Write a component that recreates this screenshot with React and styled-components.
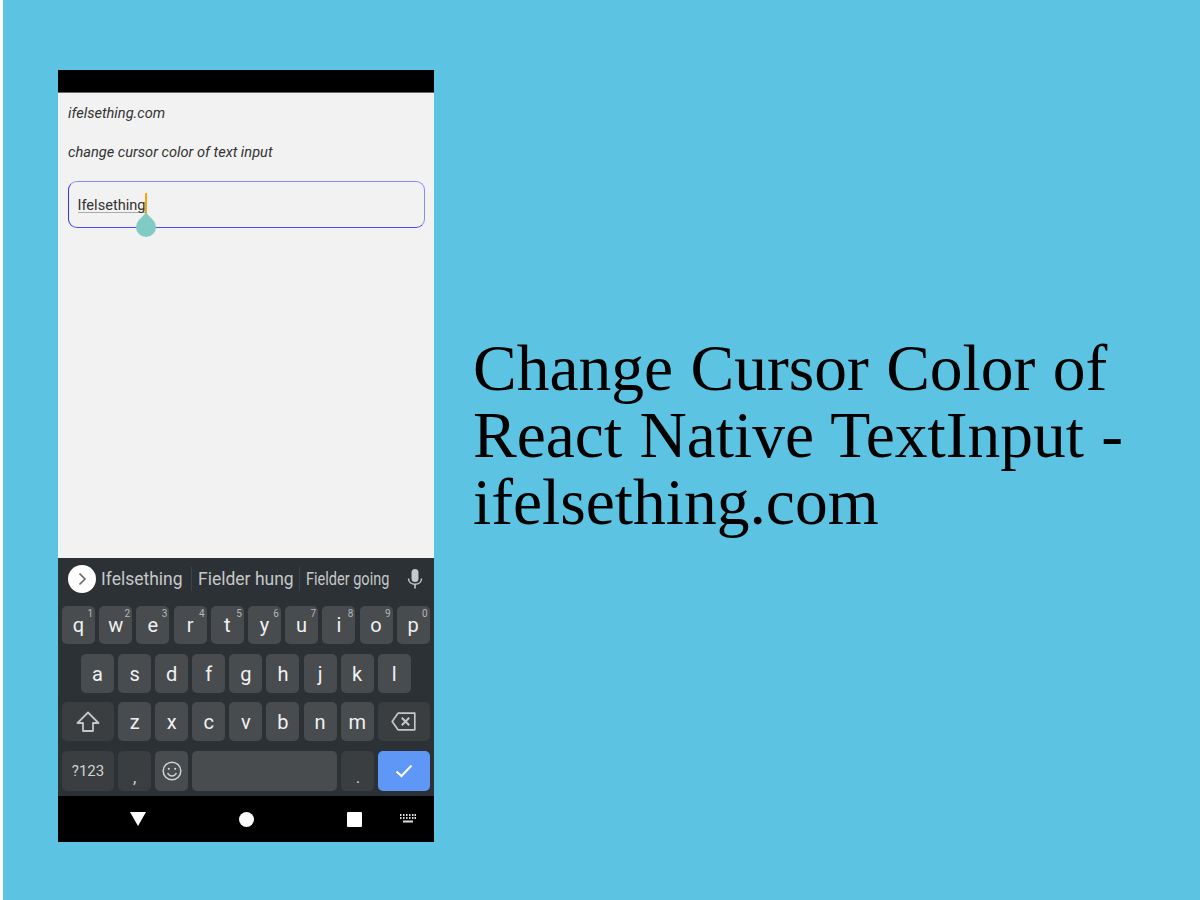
import React from 'react';
import styled, { createGlobalStyle } from 'styled-components';

const Global = createGlobalStyle`
  html, body {
    margin: 0;
    padding: 0;
    background: #fff;
  }
`;

const Page = styled.div`
  width: 1197px;
  height: 900px;
  margin-left: 3px;
  background: #5cc4e2;
  display: flex;
  overflow: hidden;
`;

const Phone = styled.div`
  width: 376px;
  height: 772px;
  margin: 70px 0 0 55px;
  display: flex;
  flex-direction: column;
  flex-shrink: 0;
  font-family: Roboto, sans-serif;
`;

const StatusBar = styled.div`
  height: 22px;
  background: #000;
  border-bottom: 1px solid #666;
`;

const Content = styled.div`
  flex: 1;
  background: #f2f2f2;
  padding: 12px 10px 0;
  display: flex;
  flex-direction: column;
`;

const Label = styled.div`
  font-size: 14.6px;
  font-style: italic;
  font-weight: 400;
  line-height: 16px;
  height: 39px;
  color: #333;
`;

const InputBox = styled.div`
  position: relative;
  width: 357px;
  height: 47px;
  box-sizing: border-box;
  margin-top: -2px;
  border: 1px solid #8a8aff;
  border-bottom-color: #4a4aff;
  border-left-color: #3030ff;
  border-radius: 9px;
  padding: 15px 8.5px 0;
  font-size: 14.6px;
  line-height: 16px;
  color: #333;
`;

const Typed = styled.span`
  display: inline-block;
  line-height: 14px;
  border-bottom: 1px solid #aaa;
`;

const Cursor = styled.div`
  position: absolute;
  left: 76px;
  top: 11px;
  width: 2px;
  height: 21px;
  background: #f7a600;
`;

const Handle = styled.div`
  position: absolute;
  left: 67px;
  top: 35px;
  width: 20px;
  height: 20px;
  background: #80cbc4;
  border-radius: 50% 0 50% 50%;
  transform: rotate(-45deg);
`;

const Keyboard = styled.div`
  height: 238px;
  background: #2c3135;
  display: flex;
  flex-direction: column;
`;

const Suggestions = styled.div`
  height: 48px;
  box-sizing: border-box;
  padding: 0 0 6px 10px;
  display: flex;
  align-items: center;
  color: #c6c8c9;
`;

const ExpandButton = styled.div`
  width: 28px;
  height: 28px;
  border-radius: 50%;
  background: #fff;
  display: flex;
  align-items: center;
  justify-content: center;
  margin-right: 5px;
`;

const Suggestion = styled.div`
  font-size: 17.5px;
  white-space: nowrap;
  width: ${(p) => p.$width}px;
  transform: scaleX(${(p) => p.$squeeze || 1});
  transform-origin: left center;
`;

const Separator = styled.div`
  width: 1px;
  height: 24px;
  background: #3d4246;
  margin: 0 6px 0 ${(p) => p.$left || 6}px;
`;

const MicSlot = styled.div`
  display: flex;
  margin-left: 16px;
`;

const KeyRows = styled.div`
  display: flex;
  flex-direction: column;
`;

const KeyRow = styled.div`
  display: flex;
  gap: ${(p) => p.$gap || 4.1}px;
  height: ${(p) => p.$height || 39}px;
  margin-bottom: ${(p) => p.$bottom ?? 9}px;
  padding-left: ${(p) => p.$indent || 4}px;
`;

const Key = styled.div`
  position: relative;
  width: ${(p) => p.$width || 33}px;
  height: 100%;
  box-sizing: border-box;
  padding-top: ${(p) => (p.$low ? 12 : 0)}px;
  flex-shrink: 0;
  border-radius: 5px;
  background: ${(p) => (p.$accent ? '#5e97f6' : p.$dark ? '#3a3e41' : '#484c4f')};
  color: ${(p) => (p.$dark ? '#d0d2d3' : '#f1f1f1')};
  font-size: ${(p) => p.$size || 20}px;
  display: flex;
  align-items: center;
  justify-content: center;
`;

const Hint = styled.span`
  position: absolute;
  top: 2px;
  right: 2px;
  font-size: 10px;
  line-height: 11px;
  color: #b4b7b8;
`;

const NavBar = styled.div`
  height: 46px;
  background: #000;
  display: grid;
  grid-template-columns: 76px 140px 76px 32px;
  padding-left: 42px;
  align-items: center;
  justify-items: center;
`;

const HomeDot = styled.div`
  width: 15px;
  height: 15px;
  border-radius: 50%;
  background: #fff;
`;

const RecentSquare = styled.div`
  width: 15px;
  height: 15px;
  border-radius: 1px;
  background: #fff;
`;

const Title = styled.h1`
  margin: 335px 0 0 39px;
  width: 670px;
  font-family: 'Liberation Serif', serif;
  font-weight: 400;
  font-size: 65.5px;
  line-height: 67px;
  word-spacing: 1px;
  color: #000;
`;

const Chevron = () => (
  <svg width="14" height="14" viewBox="0 0 14 14" fill="none" stroke="#666" strokeWidth="1.6">
    <path d="M4.5 1.5 10 7l-5.5 5.5" />
  </svg>
);

const Mic = () => (
  <svg width="16" height="20" viewBox="0 0 16 20" fill="#c6c8c9">
    <rect x="4.5" y="0" width="7" height="13" rx="3.5" />
    <path d="M1.5 9.5c0 3.6 2.9 5.8 6.5 5.8s6.5-2.2 6.5-5.8" fill="none" stroke="#c6c8c9" strokeWidth="1.5" />
    <rect x="7.2" y="15" width="1.6" height="4.5" />
  </svg>
);

const Shift = () => (
  <svg width="24" height="22" viewBox="0 0 24 22" fill="none" stroke="#c4c6c7" strokeWidth="1.8">
    <path d="M12 1.5 22.5 12h-5.5v8H7v-8H1.5z" strokeLinejoin="round" />
  </svg>
);

const Backspace = () => (
  <svg width="25" height="19" viewBox="0 0 25 19" fill="none" stroke="#c4c6c7" strokeWidth="1.7">
    <path d="M7 1.2H23.8v16.6H7L1.2 9.5z" strokeLinejoin="round" />
    <path d="M10.8 5.8l7.4 7.4M18.2 5.8l-7.4 7.4" strokeWidth="2" />
  </svg>
);

const Smiley = () => (
  <svg width="20" height="20" viewBox="0 0 20 20" fill="none" stroke="#d0d2d3" strokeWidth="1.5">
    <circle cx="10" cy="10" r="8.8" />
    <circle cx="6.8" cy="7.8" r="1.1" fill="#d0d2d3" stroke="none" />
    <circle cx="13.2" cy="7.8" r="1.1" fill="#d0d2d3" stroke="none" />
    <path d="M5.6 12c1 2 2.6 3 4.4 3s3.4-1 4.4-3" />
  </svg>
);

const Check = () => (
  <svg width="18" height="14" viewBox="0 0 18 14" fill="none" stroke="#fff" strokeWidth="2">
    <path d="M1.5 7.5 6.5 12 16.5 1.5" />
  </svg>
);

const BackTriangle = () => (
  <svg width="16" height="14" viewBox="0 0 16 14" fill="#fff">
    <path d="M0 0h16L8 14z" />
  </svg>
);

const KeyboardGlyph = () => (
  <svg width="16" height="10" viewBox="0 0 16 10" fill="#ddd">
    {[0, 3, 6, 9, 12, 14.5].map((x) => (
      <rect key={x} x={x} y="0" width="1.5" height="2" />
    ))}
    {[0, 3, 6, 9, 12, 14.5].map((x) => (
      <rect key={x} x={x} y="3" width="1.5" height="2" />
    ))}
    <rect x="3" y="6.5" width="10" height="2" />
  </svg>
);

const topRow = [
  ['q', '1'], ['w', '2'], ['e', '3'], ['r', '4'], ['t', '5'],
  ['y', '6'], ['u', '7'], ['i', '8'], ['o', '9'], ['p', '0'],
];

export default function App() {
  return (
    <>
      <Global />
      <Page>
        <Phone>
          <StatusBar />
          <Content>
            <Label>ifelsething.com</Label>
            <Label>change cursor color of text input</Label>
            <InputBox>
              <Typed>Ifelsething</Typed>
              <Cursor />
              <Handle />
            </InputBox>
          </Content>
          <Keyboard>
            <Suggestions>
              <ExpandButton><Chevron /></ExpandButton>
              <Suggestion $width={82}>Ifelsething</Suggestion>
              <Separator $left={8} />
              <Suggestion $width={95}>Fielder hung</Suggestion>
              <Separator />
              <Suggestion $width={85} $squeeze={0.83}>Fielder going</Suggestion>
              <MicSlot><Mic /></MicSlot>
            </Suggestions>
            <KeyRows>
              <KeyRow $height={38} $bottom={10} $gap={4.2}>
                {topRow.map(([k, n]) => (
                  <Key key={k}>{k}<Hint>{n}</Hint></Key>
                ))}
              </KeyRow>
              <KeyRow $indent={23}>
                {'asdfghjkl'.split('').map((k) => <Key key={k}>{k}</Key>)}
              </KeyRow>
              <KeyRow $bottom={10}>
                <Key $dark $width={52}><Shift /></Key>
                {'zxcvbnm'.split('').map((k) => <Key key={k}>{k}</Key>)}
                <Key $dark $width={52}><Backspace /></Key>
              </KeyRow>
              <KeyRow $height={40} $bottom={0}>
                <Key $dark $width={52} $size={15}>?123</Key>
                <Key $dark $low $size={17}>,</Key>
                <Key><Smiley /></Key>
                <Key $width={145} />
                <Key $dark $low $size={17}>.</Key>
                <Key $accent $width={52}><Check /></Key>
              </KeyRow>
            </KeyRows>
          </Keyboard>
          <NavBar>
            <BackTriangle />
            <HomeDot />
            <RecentSquare />
            <KeyboardGlyph />
          </NavBar>
        </Phone>
        <Title>Change Cursor Color of React Native TextInput - ifelsething.com</Title>
      </Page>
    </>
  );
}
